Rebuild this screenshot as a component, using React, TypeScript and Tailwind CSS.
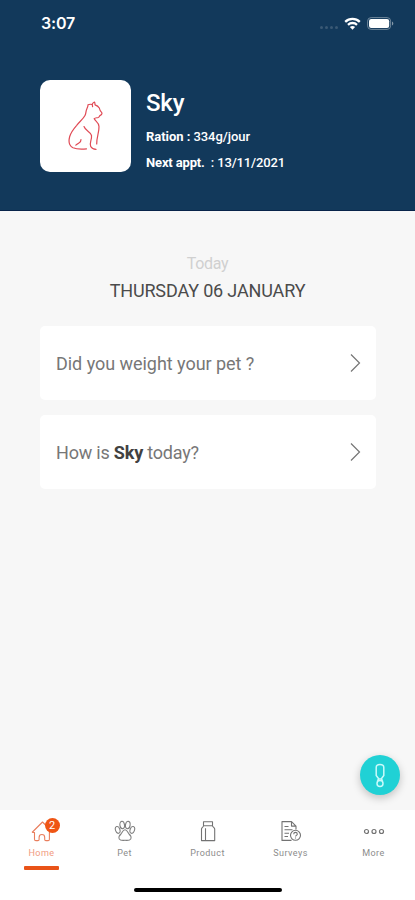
import type { ReactNode } from "react";

type Tab = {
  id: string;
  label: string;
  icon: ReactNode;
  active?: boolean;
  badge?: number;
};

function CatIcon() {
  return (
    <svg width="36" height="50" viewBox="0 0 36 50" fill="none" stroke="#e04a55" strokeWidth="1.2" strokeLinecap="round" strokeLinejoin="round">
      <path d="M26.300 17.700c.6-1 2.400-.8 4-1.200 1.200-.4.8-1.500 2-2.100 1.500-.6 2-1.900 1.300-3-1.200-1-1.900-2.400-2.300-4.400-.9-1.600-2.600-2.700-4.300-3.200 0-1.100-.1-2-.5-2.800-1.200.5-1.900 1.400-2.500 2.500-1.400-.4-2.800-.3-4 .2.100 1.600-.4 2.600-1.200 4.300-1.200 2.500-.5 4-1.800 6.500-1.900 3.500-5.500 6.300-8.300 9.800C5.500 28 2.800 31.500 1.700 35.500.5 40 .9 44.800 5 46.700c4 1.700 8.500 1.600 13.500 1.100" />
      <path d="M26.300 17.700c1 2.800 4.500 3.300 4.700 7.800.2 6-2.500 11-2.300 17.500" />
      <path d="M16 25.500c1.500 4.500 6.500 5 7.500 9 .6 4-2.500 7.500-.8 11 1 2 3.300 2.800 5.300 2.900" />
      <path d="M13 38.500c.3 3.500-2.500 3-5.200 5.700M24.300 3.500l.3 2.200" />
    </svg>
  );
}

function HomeIcon() {
  return (
    <svg width="22" height="22" viewBox="0 0 22 22" fill="none" stroke="#e97e5d" strokeWidth="1.1" strokeLinejoin="round">
      <path d="M1 12.500 11.500 2l9 9M1 12.500h2.500v6.700c0 .9.500 1.400 1.400 1.400h2c.8 0 1.200-.4 1.200-1.200v-2c0-3.900 5.600-3.900 5.600 0v2c0 .8.400 1.200 1.200 1.200h2.200c.9 0 1.300-.5 1.300-1.400v-7.200" />
    </svg>
  );
}

function PawIcon() {
  return (
    <svg width="22" height="22" viewBox="0 0 22 22" fill="none" stroke="#808080" strokeWidth="1.1">
      <ellipse cx="8.200" cy="5" rx="2.300" ry="3.700" transform="rotate(-8 8.200 5)" />
      <ellipse cx="13.800" cy="5" rx="2.300" ry="3.700" transform="rotate(8 13.800 5)" />
      <ellipse cx="3.700" cy="9.900" rx="2.200" ry="3.500" transform="rotate(-18 3.700 9.900)" />
      <ellipse cx="18.300" cy="9.900" rx="2.200" ry="3.500" transform="rotate(18 18.300 9.900)" />
      <path d="M11 9.800c-2.300 0-2.600 2.600-4 4.200-1.800 1.500-2.500 3.200-1.700 4.900 1.100 2 3.300 1.400 5.700 1.400s4.600.6 5.700-1.400c.8-1.700.1-3.400-1.700-4.900-1.400-1.600-1.700-4.200-4-4.200Z" />
    </svg>
  );
}

function ProductIcon() {
  return (
    <svg width="22" height="22" viewBox="0 0 22 22" fill="none" stroke="#737373" strokeWidth="1.1" strokeLinejoin="round">
      <path d="M6.500 1.700h9v4h-9ZM6.500 5.700c-.2 1.600-2 1.800-2 3.300v11.600h13.200V9c0-1.500-2-1.700-2.200-3.300M8.500 8.200v12.400" />
    </svg>
  );
}

function SurveyIcon() {
  return (
    <svg width="22" height="22" viewBox="0 0 22 22" fill="none" stroke="#737373" strokeWidth="1.1" strokeLinejoin="round">
      <path d="M11.500 20.400H2V1.600h9.500l4.500 4.500v3.500M11.500 1.600v4.500H16M4.500 6.500h4M4.500 9.800h8M4.500 13.200H9M4.500 16.500H8" />
      <circle cx="15.500" cy="15.300" r="5" />
      <path d="M13.700 14.200c0-2.400 3.600-2.400 3.600 0 0 1.100-1.800 1.200-1.800 2.300M15.500 17.500v1" />
    </svg>
  );
}

function MoreIcon() {
  return (
    <svg width="22" height="22" viewBox="0 0 22 22" fill="none" stroke="#737373" strokeWidth="1.200">
      <circle cx="3.500" cy="11.500" r="2" />
      <circle cx="11" cy="11.500" r="2" />
      <circle cx="18.500" cy="11.500" r="2" />
    </svg>
  );
}

function StatusBar() {
  return (
    <div className="flex h-[46px] items-center justify-between pr-[21px] pl-[41px]">
      <span className="font-['Inter',sans-serif] text-base leading-none font-semibold tracking-[-0.2px]">3:07</span>
      <div className="flex items-center">
        <div className="mt-2 mr-[6px] flex gap-[2px]">
          <span className="size-[3px] rounded-full bg-[#3a5975]" />
          <span className="size-[3px] rounded-full bg-[#3a5975]" />
          <span className="size-[3px] rounded-full bg-[#3a5975]" />
          <span className="size-[3px] rounded-full bg-[#3a5975]" />
        </div>
        <svg width="17" height="13" viewBox="0 0 17 13" fill="none" stroke="white" strokeWidth="2.300">
          <path d="M1.200 4.800C5.300.9 11.700.9 15.800 4.800M4 7.800c2.500-2.400 6.500-2.400 9 0" />
          <path d="M8.500 12.700 5.900 10c1.500-1.300 3.700-1.300 5.200 0Z" fill="white" stroke="none" />
        </svg>
        <svg className="ml-[6px]" width="27" height="13" viewBox="0 0 27 13">
          <rect x=".6" y=".6" width="23" height="11.800" rx="3.500" fill="none" stroke="#6f879b" />
          <rect x="2" y="2" width="20.200" height="9" rx="2.200" fill="white" />
          <path d="M25 4.500c1.800.7 1.800 3.300 0 4Z" fill="#8497a8" />
        </svg>
      </div>
    </div>
  );
}

function QuestionCard({ children }: { children: ReactNode }) {
  return (
    <button className="flex h-[74px] w-full items-center justify-between rounded-[5px] bg-white pr-[15px] pl-4 text-left text-[18px] text-[#777]">
      <span className="whitespace-pre">{children}</span>
      <svg width="11" height="20" viewBox="0 0 11 20" fill="none" stroke="#757575" strokeWidth="1.200">
        <path d="m1 1.500 8.500 8.500L1 18.500" />
      </svg>
    </button>
  );
}

const tabs: Tab[] = [
  { id: "home", label: "Home", icon: <HomeIcon />, active: true, badge: 2 },
  { id: "pet", label: "Pet", icon: <PawIcon /> },
  { id: "product", label: "Product", icon: <ProductIcon /> },
  { id: "surveys", label: "Surveys", icon: <SurveyIcon /> },
  { id: "more", label: "More", icon: <MoreIcon /> },
];

export default function App() {
  return (
    <div className="flex h-[900px] w-[415px] flex-col overflow-hidden bg-[#f7f7f7] font-['Roboto',sans-serif]">
      <header className="h-[211px] shrink-0 border-b border-[#08244a] bg-[#12395b] text-white">
        <StatusBar />
        <div className="flex pt-[34px] pl-10">
          <div className="flex h-[92px] w-[91px] items-center justify-center rounded-[10px] bg-white">
            <CatIcon />
          </div>
          <div className="pt-2 pl-[15px]">
            <h1 className="text-[24px] leading-[30px] font-medium tracking-[-0.2px]">Sky</h1>
            <p className="mt-[9px] text-[13px] leading-5 font-medium tracking-[-0.05px]">
              <b className="font-bold">Ration :</b> 334g/jour
            </p>
            <p className="mt-[6px] text-[13px] leading-5 font-medium tracking-[-0.15px] whitespace-pre">
              <b className="font-bold">Next appt.</b>{"  : 13/11/2021"}
            </p>
          </div>
        </div>
      </header>

      <main className="relative flex-1 px-10 pt-[43px]">
        <div className="text-center">
          <p className="text-[16px] leading-5 tracking-[-0.35px] text-[#d0d0d0]">Today</p>
          <h2 className="mt-[5px] text-[18px] leading-6 font-normal tracking-[-0.15px] text-[#4b4b4b]">THURSDAY 06 JANUARY</h2>
        </div>
        <div className="-mr-px mt-[23px] space-y-[15px]">
          <QuestionCard>
            <span className="tracking-[-0.04px]">Did you weight your pet ?</span>
          </QuestionCard>
          <QuestionCard>
            <span className="tracking-[-0.2px]">
              How is <b className="font-bold text-[#414141]">Sky</b> today?
            </span>
          </QuestionCard>
        </div>
        <button className="absolute right-[15px] bottom-[15px] flex size-10 items-center justify-center rounded-full bg-[#20d1d5] shadow-[0_3px_8px_rgba(0,0,0,0.22)]">
          <svg width="12" height="25" viewBox="0 0 12 25" fill="none" stroke="#c9fafa" strokeWidth="1.500">
            <path d="M2.200 4.500c0-4 7.600-4 7.600 0v8L7.200 16H4.800l-2.600-3.500ZM4.800 16l-1.500 1.800M7.200 16l1.500 1.800" />
            <circle cx="6" cy="20.500" r="3" />
          </svg>
        </button>
      </main>

      <nav className="flex h-[90px] shrink-0 flex-col items-center bg-white">
        <div className="flex h-[77px] w-full">
          {tabs.map((tab) => (
            <button key={tab.id} className="flex flex-1 flex-col items-center pt-[10px]">
              <span className="relative">
                {tab.icon}
                {tab.badge ? (
                  <span className="absolute -top-[2px] left-[14px] flex size-[15px] items-center justify-center rounded-full bg-[#ef5514] text-[11px] leading-none text-white">
                    {tab.badge}
                  </span>
                ) : null}
              </span>
              <span
                className={`mt-[5px] text-[9px] leading-3 tracking-[0.45px] ${tab.active ? "text-[#f19a7e]" : "text-[#8c8c8c]"}`}
              >
                {tab.label}
              </span>
              {tab.active ? <span className="mt-[7px] h-1 w-[35px] rounded-[1px] bg-[#e95318]" /> : null}
            </button>
          ))}
        </div>
        <div className="mt-px h-1 w-[148px] rounded-full bg-black" />
      </nav>
    </div>
  );
}
